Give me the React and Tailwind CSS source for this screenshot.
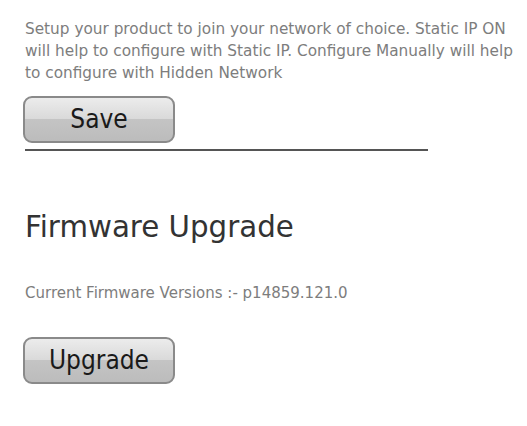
export default function App() {
  return (
    <div
      className="min-h-screen bg-white pl-[25px] pt-[18px]"
      style={{ fontFamily: '"DejaVu Sans", sans-serif' }}
    >
      <p className="whitespace-nowrap text-[15.3px] leading-[22px] text-[#7d7d7d]">
        Setup your product to join your network of choice. Static IP ON
        <br />
        will help to configure with Static IP. Configure Manually will help
        <br />
        to configure with Hidden Network
      </p>

      <button
        className="-ml-[2px] mt-[12px] flex h-[47px] w-[152px] items-center justify-center rounded-[9px] border-2 border-[#8a8a8a] bg-[linear-gradient(to_bottom,#ececec_0%,#d9d9d9_50%,#c4c4c4_50%,#bcbcbc_100%)] text-[26px] text-[#1a1a1a]"
        style={{ fontFamily: '"DejaVu Sans Condensed", "DejaVu Sans", sans-serif' }}
      >
        Save
      </button>

      <div className="mt-[6px] h-[2px] w-[403px] bg-[#555]" />

      <h2 className="mt-[58px] text-[29.3px] leading-[36px] text-[#333]">Firmware Upgrade</h2>

      <p className="mt-[38px] text-[15px] leading-[20px] text-[#7d7d7d]">
        Current Firmware Versions :- p14859.121.0
      </p>

      <button
        className="-ml-[2px] mt-[34px] flex h-[47px] w-[152px] items-center justify-center rounded-[9px] border-2 border-[#8a8a8a] bg-[linear-gradient(to_bottom,#ececec_0%,#d9d9d9_50%,#c4c4c4_50%,#bcbcbc_100%)] text-[26px] text-[#1a1a1a]"
        style={{ fontFamily: '"DejaVu Sans Condensed", "DejaVu Sans", sans-serif' }}
      >
        Upgrade
      </button>
    </div>
  );
}
